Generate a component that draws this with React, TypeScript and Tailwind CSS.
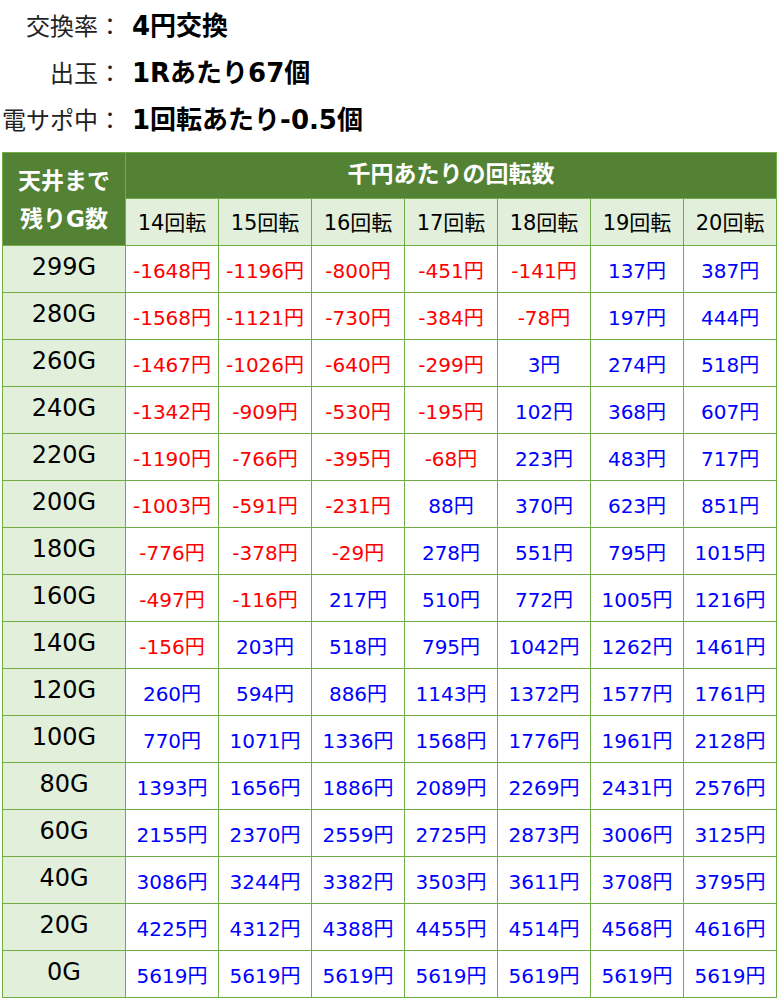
import React from 'react';

const cols = [14, 15, 16, 17, 18, 19, 20];

const rows: { g: string; v: number[] }[] = [
  { g: '299G', v: [-1648, -1196, -800, -451, -141, 137, 387] },
  { g: '280G', v: [-1568, -1121, -730, -384, -78, 197, 444] },
  { g: '260G', v: [-1467, -1026, -640, -299, 3, 274, 518] },
  { g: '240G', v: [-1342, -909, -530, -195, 102, 368, 607] },
  { g: '220G', v: [-1190, -766, -395, -68, 223, 483, 717] },
  { g: '200G', v: [-1003, -591, -231, 88, 370, 623, 851] },
  { g: '180G', v: [-776, -378, -29, 278, 551, 795, 1015] },
  { g: '160G', v: [-497, -116, 217, 510, 772, 1005, 1216] },
  { g: '140G', v: [-156, 203, 518, 795, 1042, 1262, 1461] },
  { g: '120G', v: [260, 594, 886, 1143, 1372, 1577, 1761] },
  { g: '100G', v: [770, 1071, 1336, 1568, 1776, 1961, 2128] },
  { g: '80G', v: [1393, 1656, 1886, 2089, 2269, 2431, 2576] },
  { g: '60G', v: [2155, 2370, 2559, 2725, 2873, 3006, 3125] },
  { g: '40G', v: [3086, 3244, 3382, 3503, 3611, 3708, 3795] },
  { g: '20G', v: [4225, 4312, 4388, 4455, 4514, 4568, 4616] },
  { g: '0G', v: [5619, 5619, 5619, 5619, 5619, 5619, 5619] },
];

const specs = [
  { label: '交換率', value: '4円交換' },
  { label: '出玉', value: '1Rあたり67個' },
  { label: '電サポ中', value: '1回転あたり-0.5個' },
];

const App: React.FC = () => {
  return (
    <div className="w-[777px] bg-white text-black font-['DejaVu_Sans','Noto_Sans_CJK_JP',sans-serif]">
      {/* spec list */}
      <div className="pt-[3px] pb-[8px]">
        {specs.map((s) => (
          <div key={s.label} className="flex items-center h-[47px]">
            <span className="w-[122px] text-right text-[24px] text-[#222]">{s.label}：</span>
            <span className="ml-[10px] text-[26px] font-bold">{s.value}</span>
          </div>
        ))}
      </div>

      {/* table */}
      <table className="ml-[2px] w-[775px] border-collapse table-fixed">
        <colgroup>
          <col className="w-[123px]" />
          {cols.map((c) => (
            <col key={c} className="w-[93px]" />
          ))}
        </colgroup>
        <thead>
          <tr className="h-[46px]">
            <th
              rowSpan={2}
              className="border border-[#70ad47] bg-[#548235] text-white text-[23px] font-bold leading-[38px] pt-[2px]"
            >
              天井まで
              <br />
              残りG数
            </th>
            <th colSpan={7} className="border border-[#70ad47] bg-[#548235] text-white text-[23px] font-bold pb-[2px]">
              千円あたりの回転数
            </th>
          </tr>
          <tr className="h-[47px]">
            {cols.map((c) => (
              <th key={c} className="border border-[#70ad47] bg-[#e2efda] text-[21px] font-normal pt-[3px]">
                {c}回転
              </th>
            ))}
          </tr>
        </thead>
        <tbody>
          {rows.map((r) => (
            <tr key={r.g} className="h-[47px]">
              <td className="border border-[#70ad47] bg-[#e2efda] text-center text-[24px] pb-[4px]">{r.g}</td>
              {r.v.map((v, i) => (
                <td
                  key={i}
                  className={`border border-[#70ad47] text-center text-[20px] pt-[4px] ${
                    v < 0 ? 'text-[#ff0000]' : 'text-[#0000ff]'
                  }`}
                >
                  {v}円
                </td>
              ))}
            </tr>
          ))}
        </tbody>
      </table>
    </div>
  );
};

export default App;
